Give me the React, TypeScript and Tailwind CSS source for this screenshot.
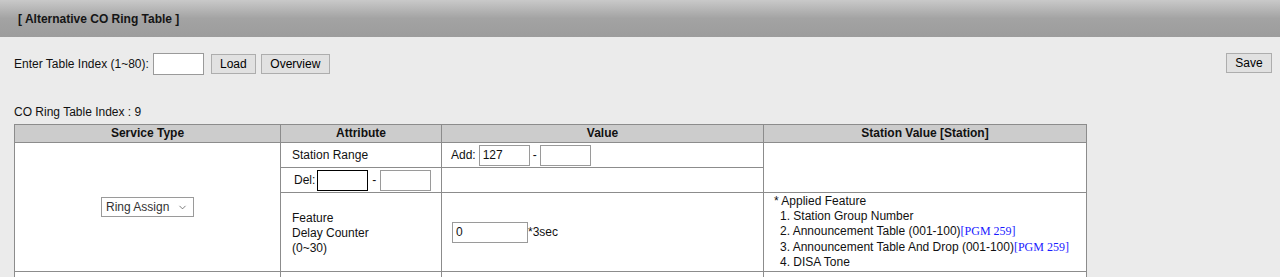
import { ChevronDown } from 'lucide-react'

const cell = 'border border-[#8c8c8c] align-middle'
const txtInput = 'h-[21px] border border-[#9a9a9a] bg-white px-[3px] text-[12px] outline-none'
const btn = 'h-[20px] border border-[#adadad] bg-[#e1e1e1] px-[7px] text-[12px] leading-none text-black'

function Pgm() {
  return <span className="font-['Liberation_Serif',serif] text-[12px] text-[#1a1aff]">[PGM 259]</span>
}

export default function App() {
  return (
    <div className="min-h-[277px] bg-[#ebebeb] font-['Liberation_Sans',Arial,sans-serif] text-[12px] text-[#111]">
      <div className="flex h-[37px] items-center bg-gradient-to-b from-[#c9c9c9] via-[#a3a3a3] to-[#9c9c9c] pl-[18px] pt-[1px] font-bold text-[#151515]">
        [ Alternative CO Ring Table ]
      </div>

      <div className="mt-[16px] flex items-start justify-between pl-[14px] pr-[8px]">
        <div className="flex items-center">
          <span>Enter Table Index (1~80):</span>
          <input className="ml-[4px] h-[22px] w-[51px] border border-[#9a9a9a] bg-white text-[12px] outline-none" />
          <button className={`${btn} ml-[7px] w-[45px]`}>Load</button>
          <button className={`${btn} ml-[5px] w-[69px]`}>Overview</button>
        </div>
        <button className={`${btn} w-[46px]`}>Save</button>
      </div>

      <div className="mt-[28px] pl-[14px]">CO Ring Table Index : 9</div>

      <table className="ml-[14px] mt-[3px] w-[1072px] table-fixed border-collapse">
        <colgroup>
          <col className="w-[266px]" />
          <col className="w-[161px]" />
          <col className="w-[322px]" />
          <col className="w-[323px]" />
        </colgroup>
        <thead>
          <tr className="h-[18px] bg-[#cccccc]">
            <th className={`${cell} font-bold leading-[15px]`}>Service Type</th>
            <th className={`${cell} font-bold leading-[15px]`}>Attribute</th>
            <th className={`${cell} font-bold leading-[15px]`}>Value</th>
            <th className={`${cell} font-bold leading-[15px]`}>Station Value [Station]</th>
          </tr>
        </thead>
        <tbody className="bg-white">
          <tr className="h-[25px]">
            <td className={`${cell} text-center`} rowSpan={3}>
              <div className="inline-flex h-[20px] w-[93px] items-center justify-between border border-[#9a9a9a] bg-white pl-[4px] pr-[5px] text-[#333]">
                <span>Ring Assign</span>
                <ChevronDown size={11} strokeWidth={1.5} className="text-[#444]" />
              </div>
            </td>
            <td className={`${cell} pl-[11px]`}>Station Range</td>
            <td className={`${cell} pl-[9px]`}>
              <div className="flex items-center">
                <span>Add:</span>
                <input className={`${txtInput} ml-[3px] w-[51px]`} defaultValue="127" />
                <span className="mx-[3px]">-</span>
                <input className={`${txtInput} w-[51px]`} />
              </div>
            </td>
            <td className={cell} rowSpan={2}></td>
          </tr>
          <tr className="h-[25px]">
            <td className={`${cell} pl-[13px]`}>
              <div className="flex items-center">
                <span>Del:</span>
                <input className={`${txtInput} ml-[2px] w-[51px] border-black`} />
                <span className="mx-[4px]">-</span>
                <input className={`${txtInput} w-[51px]`} />
              </div>
            </td>
            <td className={cell}></td>
          </tr>
          <tr className="h-[79px]">
            <td className={`${cell} pl-[11px] pt-[3px] leading-[15px]`}>
              Feature
              <br />
              Delay Counter
              <br />
              (0~30)
            </td>
            <td className={`${cell} pl-[10px]`}>
              <div className="flex items-center">
                <input className={`${txtInput} w-[76px]`} defaultValue="0" />
                <span>*3sec</span>
              </div>
            </td>
            <td className={`${cell} pl-[10px] leading-[15.2px]`}>
              <div>* Applied Feature</div>
              <div className="pl-[6px]">1. Station Group Number</div>
              <div className="pl-[6px]">
                2. Announcement Table (001-100)
                <Pgm />
              </div>
              <div className="pl-[6px]">
                3. Announcement Table And Drop (001-100)
                <Pgm />
              </div>
              <div className="pl-[6px]">4. DISA Tone</div>
            </td>
          </tr>
          <tr className="h-[60px]">
            <td className={cell}></td>
            <td className={cell}></td>
            <td className={`${cell} pl-[10px] align-top pt-[1px]`}>* Feature</td>
            <td className={cell}></td>
          </tr>
        </tbody>
      </table>
    </div>
  )
}
